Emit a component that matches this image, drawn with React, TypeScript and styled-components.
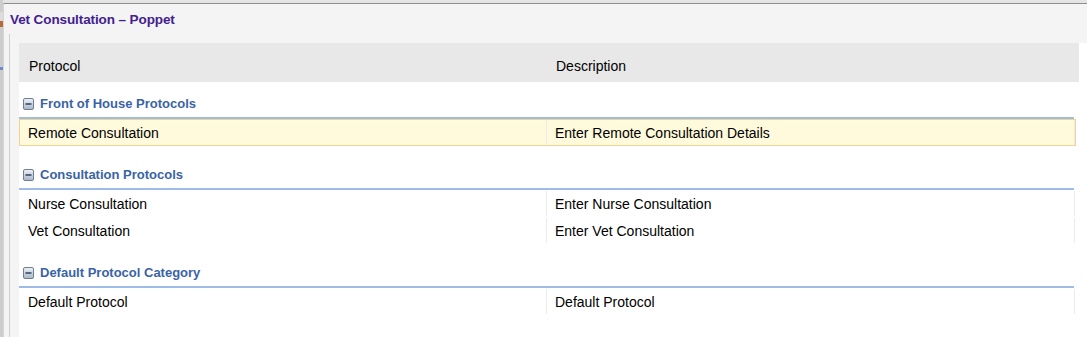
import React from "react";
import styled, { createGlobalStyle } from "styled-components";

const Global = createGlobalStyle`
  html, body { margin: 0; padding: 0; background: #e4e4e4; }
  body { font-family: "Liberation Sans", Arial, sans-serif; }
  * { box-sizing: border-box; }
`;

const Page = styled.div`
  display: flex;
  width: 1087px;
  height: 337px;
  overflow: hidden;
`;

const LeftStrip = styled.div`
  width: 3px;
  display: flex;
  flex-direction: column;
  background: #cdcdcd;
  padding-top: 12px;
`;

const StripMark = styled.div<{ $color: string; $h: number; $gap: number }>`
  height: ${(p) => p.$h}px;
  margin-bottom: ${(p) => p.$gap}px;
  background: ${(p) => p.$color};
`;

const Window = styled.div`
  flex: 1;
  margin-top: 3px;
  border-top: 1px solid #8e8e8e;
  border-left: 1px solid #d6d6d6;
  background: #f4f4f4;
  display: flex;
  flex-direction: column;
`;

const TitleBar = styled.div`
  height: 30px;
  display: flex;
  align-items: center;
  padding-left: 6px;
  padding-top: 1px;
`;

const Title = styled.span`
  font-size: 13.5px;
  font-weight: bold;
  color: #43208f;
  letter-spacing: -0.1px;
`;

const Frame = styled.div`
  flex: 1;
  display: flex;
  padding-left: 5px;
`;

const Inner = styled.div`
  flex: 1;
  display: flex;
  border-left: 1px solid #cfcfcf;
  padding: 9px 0 0 9px;
`;

const Panel = styled.div`
  flex: 1;
  background: #ffffff;
  display: flex;
  flex-direction: column;
`;

const HeaderRow = styled.div`
  width: 1060px;
  height: 39px;
  background: #e8e8e8;
  display: grid;
  grid-template-columns: 527px 1fr;
  align-items: end;
  padding-bottom: 8px;
`;

const HeaderCell = styled.div`
  padding-left: 10px;
  font-size: 14px;
  line-height: 16px;
  color: #000;
`;

const Group = styled.div`
  display: flex;
  flex-direction: column;
  margin-bottom: 7px;
`;

const GroupHeader = styled.div`
  width: 1055px;
  height: 37px;
  display: flex;
  align-items: flex-end;
  gap: 6px;
  padding: 0 0 5px 4px;
  border-bottom: 2px solid #9dbde6;
`;

const GroupTitle = styled.span`
  font-size: 13px;
  font-weight: bold;
  line-height: 16px;
  color: #3a63a6;
`;

const IconBox = styled.span`
  display: flex;
  width: 11px;
  height: 12px;
  margin-bottom: 2px;
`;

const Row = styled.div<{ $selected?: boolean }>`
  width: 1057px;
  height: 27px;
  display: grid;
  grid-template-columns: 527px 1fr;
  border: 1px solid ${(p) => (p.$selected ? "#f1d491" : "transparent")};
  background: ${(p) => (p.$selected ? "#fffadc" : "#ffffff")};
`;

const Cell = styled.div`
  display: flex;
  align-items: center;
  padding-left: 8px;
  font-size: 14px;
  color: #000;
  border-right: 1px solid #ebebeb;
`;

const CollapseIcon = () => (
  <IconBox>
    <svg width="11" height="12" viewBox="0 0 11 12">
      <defs>
        <linearGradient id="cg" x1="0" y1="0" x2="0" y2="1">
          <stop offset="0" stopColor="#eef2f7" />
          <stop offset="1" stopColor="#a9b6c7" />
        </linearGradient>
      </defs>
      <rect x="0.5" y="0.5" width="10" height="11" rx="1.5" fill="url(#cg)" stroke="#6f7f97" />
      <rect x="2.5" y="5" width="6" height="2" fill="#55657d" />
    </svg>
  </IconBox>
);

type Item = { name: string; desc: string; selected?: boolean };
type Category = { title: string; items: Item[] };

const data: Category[] = [
  {
    title: "Front of House Protocols",
    items: [{ name: "Remote Consultation", desc: "Enter Remote Consultation Details", selected: true }],
  },
  {
    title: "Consultation Protocols",
    items: [
      { name: "Nurse Consultation", desc: "Enter Nurse Consultation" },
      { name: "Vet Consultation", desc: "Enter Vet Consultation" },
    ],
  },
  {
    title: "Default Protocol Category",
    items: [{ name: "Default Protocol", desc: "Default Protocol" }],
  },
];

export default function App() {
  return (
    <>
      <Global />
      <Page>
        <LeftStrip>
          <StripMark $color="#dcdcdc" $h={9} $gap={0} />
          <StripMark $color="#b86a3c" $h={6} $gap={40} />
          <StripMark $color="#6a8cc8" $h={3} $gap={0} />
        </LeftStrip>
        <Window>
          <TitleBar>
            <Title>Vet Consultation – Poppet</Title>
          </TitleBar>
          <Frame>
            <Inner>
              <Panel>
                <HeaderRow>
                  <HeaderCell>Protocol</HeaderCell>
                  <HeaderCell>Description</HeaderCell>
                </HeaderRow>
                {data.map((cat) => (
                  <Group key={cat.title}>
                    <GroupHeader>
                      <CollapseIcon />
                      <GroupTitle>{cat.title}</GroupTitle>
                    </GroupHeader>
                    {cat.items.map((it) => (
                      <Row key={it.name} $selected={it.selected}>
                        <Cell>{it.name}</Cell>
                        <Cell>{it.desc}</Cell>
                      </Row>
                    ))}
                  </Group>
                ))}
              </Panel>
            </Inner>
          </Frame>
        </Window>
      </Page>
    </>
  );
}
